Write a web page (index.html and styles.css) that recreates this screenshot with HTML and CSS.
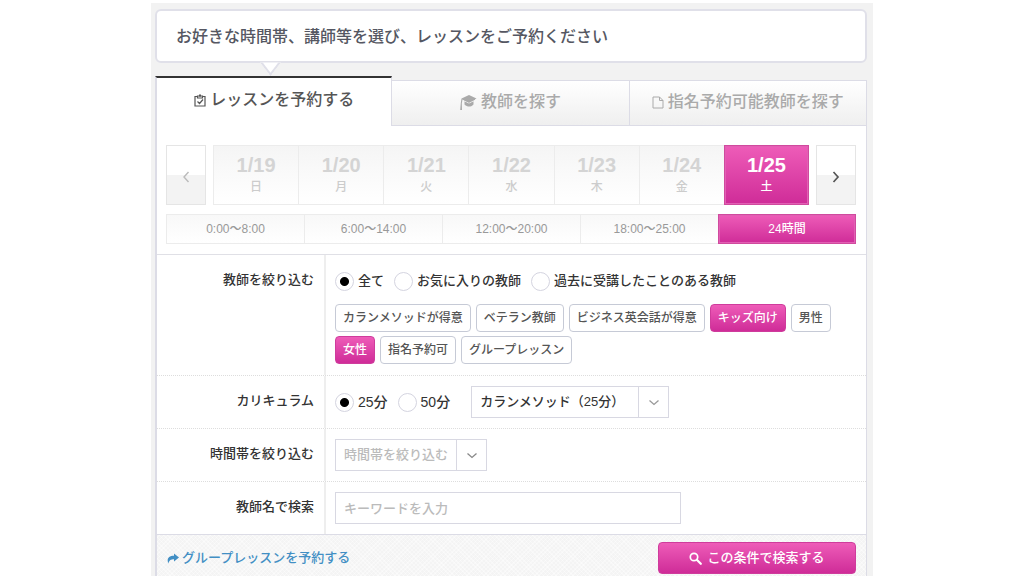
FILE: index.html
```html
<!DOCTYPE html>
<html lang="ja">
<head>
<meta charset="utf-8">
<title>レッスン予約</title>
<link rel="stylesheet" href="styles.css">
</head>
<body>
<main class="page">
  <p class="notice">お好きな時間帯、講師等を選び、レッスンをご予約ください</p>

  <nav class="tabs">
    <a class="tab tab-active" href="#reserve">
      <svg class="icon-clip" viewBox="0 0 12 13" aria-hidden="true"><path d="M3.500 2.500H1v9.500h10V2.500H8.500M3.500 2h5v2h-5zM3.500 7.500l2 2 3.500-4" fill="none" stroke="currentColor" stroke-width="1.200"/><path d="M5 .5h2v2H5z" fill="currentColor"/></svg>
      <span>レッスンを予約する</span>
    </a>
    <a class="tab" href="#teachers">
      <svg class="icon-cap" viewBox="0 0 17 17" aria-hidden="true"><path d="M9 1l7.500 3.500L9 8.500 2.500 5.500 1.800 9.500 2 16H.2L.8 9l.7-4.500z" fill="currentColor"/><path d="M4.500 7.200L9 9.400l4.500-2.200v3.300C12 12.300 10.500 12.500 9 12.500s-3-.4-4.500-2z" fill="currentColor"/><path d="M3 5.300l6 3 6-3" fill="none" stroke="currentColor"/></svg>
      <span>教師を探す</span>
    </a>
    <a class="tab" href="#nominate">
      <svg class="icon-file" viewBox="0 0 12 13" aria-hidden="true"><path d="M1 1h6.500L11 4.500V12H1zM7.500 1v3.500H11" fill="none" stroke="currentColor" stroke-width="1"/></svg>
      <span>指名予約可能教師を探す</span>
    </a>
  </nav>

  <form class="panel">
    <section class="schedule">
      <div class="week">
        <button class="step step-off" type="button" aria-label="前の週"><svg viewBox="0 0 8 12" aria-hidden="true"><path d="M6.500 1L2 6l4.500 5" fill="none" stroke="currentColor" stroke-width="1.400"/></svg></button>
        <div class="days">
          <button class="day" type="button"><b>1/19</b><span>日</span></button>
          <button class="day" type="button"><b>1/20</b><span>月</span></button>
          <button class="day" type="button"><b>1/21</b><span>火</span></button>
          <button class="day" type="button"><b>1/22</b><span>水</span></button>
          <button class="day" type="button"><b>1/23</b><span>木</span></button>
          <button class="day" type="button"><b>1/24</b><span>金</span></button>
          <button class="day picked" type="button"><b>1/25</b><span>土</span></button>
        </div>
        <button class="step" type="button" aria-label="次の週"><svg viewBox="0 0 8 12" aria-hidden="true"><path d="M1.500 1L6 6l-4.500 5" fill="none" stroke="currentColor" stroke-width="1.700"/></svg></button>
      </div>
      <div class="slots">
        <button class="slot" type="button">0:00〜8:00</button>
        <button class="slot" type="button">6:00〜14:00</button>
        <button class="slot" type="button">12:00〜20:00</button>
        <button class="slot" type="button">18:00〜25:00</button>
        <button class="slot picked" type="button">24時間</button>
      </div>
    </section>

    <div class="row" role="group" aria-labelledby="l-teacher">
      <div class="label" id="l-teacher">教師を絞り込む</div>
      <div class="field field-tall">
        <div class="radios">
          <label class="choice"><input type="radio" name="scope" checked>全て</label>
          <label class="choice"><input type="radio" name="scope">お気に入りの教師</label>
          <label class="choice"><input type="radio" name="scope">過去に受講したことのある教師</label>
        </div>
        <div class="tags">
          <button class="tag" type="button">カランメソッドが得意</button>
          <button class="tag" type="button">ベテラン教師</button>
          <button class="tag" type="button">ビジネス英会話が得意</button>
          <button class="tag tag-on" type="button">キッズ向け</button>
          <button class="tag" type="button">男性</button>
          <button class="tag tag-on" type="button">女性</button>
          <button class="tag" type="button">指名予約可</button>
          <button class="tag" type="button">グループレッスン</button>
        </div>
      </div>
    </div>

    <div class="row">
      <label class="label" for="course">カリキュラム</label>
      <div class="field field-inline">
        <div class="radios radios-large">
          <label class="choice"><input type="radio" name="length" checked>25分</label>
          <label class="choice"><input type="radio" name="length">50分</label>
        </div>
        <span class="select">
          <select class="box select-course" id="course"><option>カランメソッド（25分）</option></select>
          <svg class="caret" viewBox="0 0 31 32" aria-hidden="true"><path d="M.5 1v30" stroke="#d8d8e2"/><path d="M11.500 14.500l4.500 4 4.500-4" fill="none" stroke="#999" stroke-width="1.300"/></svg>
        </span>
      </div>
    </div>

    <div class="row">
      <label class="label" for="time">時間帯を絞り込む</label>
      <div class="field">
        <span class="select">
          <select class="box select-time" id="time"><option>時間帯を絞り込む</option></select>
          <svg class="caret" viewBox="0 0 31 32" aria-hidden="true"><path d="M.5 1v30" stroke="#d8d8e2"/><path d="M11.500 14.500l4.500 4 4.500-4" fill="none" stroke="#888" stroke-width="1.300"/></svg>
        </span>
      </div>
    </div>

    <div class="row">
      <label class="label" for="keyword">教師名で検索</label>
      <div class="field"><input class="box keyword" id="keyword" type="text" placeholder="キーワードを入力"></div>
    </div>

    <footer class="foot">
      <a class="group-link" href="#group">
        <svg class="icon-share" viewBox="0 0 12 11" aria-hidden="true"><path d="M7 .5L12 4.500 7 8.500V6.200C4 6.200 2 7 1.500 10.500-.6 6.500 1.200 2.700 7 2.700z" fill="currentColor"/></svg>
        <span>グループレッスンを予約する</span>
      </a>
      <button class="search" type="submit">
        <svg class="icon-search" viewBox="0 0 13 13" aria-hidden="true"><circle cx="5" cy="5" r="3.700" fill="none" stroke="currentColor" stroke-width="1.700"/><path d="M7.800 7.800l4 4" stroke="currentColor" stroke-width="2.200" stroke-linecap="round"/></svg>
        <span>この条件で検索する</span>
      </button>
    </footer>
  </form>
</main>
</body>
</html>
```
FILE: styles.css
```css
* { box-sizing: border-box; }

body {
  margin: 0;
  padding-top: 3px;
  background: #fff;
  color: #333;
  font: 500 13px/20px "Liberation Sans", "Noto Sans CJK JP", sans-serif;
}

button, input, select {
  margin: 0;
  color: inherit;
  font: inherit;
}

button { padding: 0; cursor: pointer; }
a { text-decoration: none; }
svg { display: block; flex: none; }

.page {
  max-width: 722px;
  margin: 0 auto;
  padding: 6px 6px 0 4px;
  background: #f2f2f2;
}

.notice {
  position: relative;
  margin: 0 0 13px;
  padding: 14px 19px 12px;
  border: 2px solid #e0e0e9;
  border-radius: 6px;
  background: #fff;
  color: #555762;
  font-size: 16px;
  line-height: 24px;
}

/* Pointer towards the active tab */
.notice::after {
  content: "";
  position: absolute;
  top: 100%;
  left: 106px;
  width: 13px;
  height: 13px;
  margin-top: -6px;
  border: solid #e0e0e9;
  border-width: 0 2px 2px 0;
  background: #fff;
  clip-path: polygon(100% 0, 100% 100%, 0 100%);
  transform: scaleY(1.3) rotate(45deg);
}

.tabs {
  display: grid;
  grid-template-columns: repeat(3, 1fr);
  align-items: end;
}

.tab {
  display: flex;
  align-items: center;
  justify-content: center;
  gap: 4px;
  height: 46px;
  padding-bottom: 2px;
  border: solid #dcdce6;
  border-width: 1px 1px 1px 0;
  background: linear-gradient(#fff, #efefef);
  color: #aaa;
  font-size: 16px;
}

.tab-active {
  height: 50px;
  padding-bottom: 4px;
  border-width: 2px 1px 0 2px;
  border-top-color: #333;
  background: #fff;
  color: #555;
}

.icon-clip { width: 12px; height: 13px; }
.icon-cap { width: 17px; height: 17px; }
.icon-file { width: 12px; height: 13px; }

.panel {
  border: solid #dcdce6;
  border-width: 0 1px 0 2px;
  background: #fff;
}

.schedule { padding: 19px 10px 10px 9px; }

.week { display: flex; gap: 7px; }

.step {
  display: flex;
  align-items: center;
  justify-content: center;
  width: 40px;
  height: 60px;
  padding-top: 3px;
  border: 1px solid #e5e5e5;
  background: linear-gradient(#fff 50%, #f3f3f3 50%);
  color: #555;
}

.step svg { width: 8px; height: 12px; }
.step-off { color: #bbb; }

.days {
  display: grid;
  flex: 1;
  grid-template-columns: repeat(7, 1fr);
}

.day {
  display: flex;
  flex-direction: column;
  align-items: center;
  justify-content: center;
  height: 60px;
  border: solid #ececec;
  border-width: 1px 0 1px 1px;
  background: linear-gradient(#f5f5f5, #fff);
  color: #ccc;
  font-size: 12px;
}

.day b {
  color: #d4d4d4;
  font-size: 20px;
  font-weight: 700;
  line-height: 24px;
}

.slots {
  display: grid;
  grid-template-columns: repeat(5, 1fr);
  margin-top: 9px;
}

.slot {
  height: 30px;
  border: solid #ececec;
  border-width: 1px 0 1px 1px;
  background: linear-gradient(#f8f8f8, #fff);
  color: #999;
  font-size: 12px;
}

.picked {
  border: 1px solid #d04a9e;
  background: linear-gradient(#ee5cb8, #cf2c98);
  box-shadow: inset 0 0 0 1px #e25fb4;
  color: #fff;
}

.picked b { color: #fff; }

.row {
  display: flex;
  border-top: 1px dotted #ddd;
}

.schedule + .row { border-top: 1px solid #e0e0e6; }

.label {
  width: 169px;
  padding: 15px 10px 0 0;
  border-right: 2px solid #eee;
  text-align: right;
}

.field { flex: 1; padding: 10px 9px; }
.field-tall { padding: 16px 9px 11px; }
.field-inline { display: flex; align-items: center; gap: 21px; }

.radios { display: flex; gap: 10px; }
.radios-large { font-size: 14px; }

.choice {
  display: flex;
  align-items: center;
  gap: 4px;
}

.choice input {
  width: 19px;
  height: 19px;
  border: 1px solid #d4d4e0;
  border-radius: 50%;
  background: #fff;
  appearance: none;
}

.choice input:checked { background: radial-gradient(circle, #000 4px, #fff 5px); }

.tags {
  display: flex;
  flex-wrap: wrap;
  gap: 4px 5px;
  margin-top: 13px;
}

.tag {
  height: 28px;
  padding: 0 7px;
  border: 1px solid #c6cad6;
  border-radius: 4px;
  background: #fff;
  color: #555;
  font-size: 12px;
}

.tag-on {
  border-color: #cf3c9c;
  background: linear-gradient(#ee5cb8, #cf2c98);
  color: #fff;
}

.select {
  display: inline-block;
  position: relative;
  vertical-align: top;
}

.box {
  display: block;
  height: 32px;
  padding: 0 8px;
  border: 1px solid #d8d8e2;
  border-radius: 0;
  background: #fff;
  appearance: none;
}

.select-course { width: 198px; }
.select-time { width: 152px; color: #bbb; }
.keyword { width: 346px; max-width: 100%; }
.keyword::placeholder { color: #bbb; opacity: 1; }

.caret {
  position: absolute;
  top: 0;
  right: 0;
  width: 31px;
  height: 32px;
  pointer-events: none;
}

.foot {
  display: flex;
  align-items: center;
  justify-content: space-between;
  padding: 7px 10px 2px;
  border-top: 1px solid #dcdce6;
  background:
    repeating-linear-gradient(45deg, #fff6 0 1px, transparent 1px 3px),
    repeating-linear-gradient(-45deg, #fff6 0 1px, transparent 1px 3px),
    #f4f4f4;
}

.group-link {
  display: flex;
  align-items: center;
  gap: 3px;
  color: #428fc4;
}

.icon-share { width: 12px; height: 11px; }

.search {
  display: flex;
  align-items: center;
  justify-content: center;
  gap: 5px;
  width: 198px;
  height: 32px;
  border: 1px solid #cf3c9c;
  border-radius: 4px;
  background: linear-gradient(#ee5cb8, #cf2c98);
  color: #fff;
}

.icon-search { width: 13px; height: 13px; }
```
